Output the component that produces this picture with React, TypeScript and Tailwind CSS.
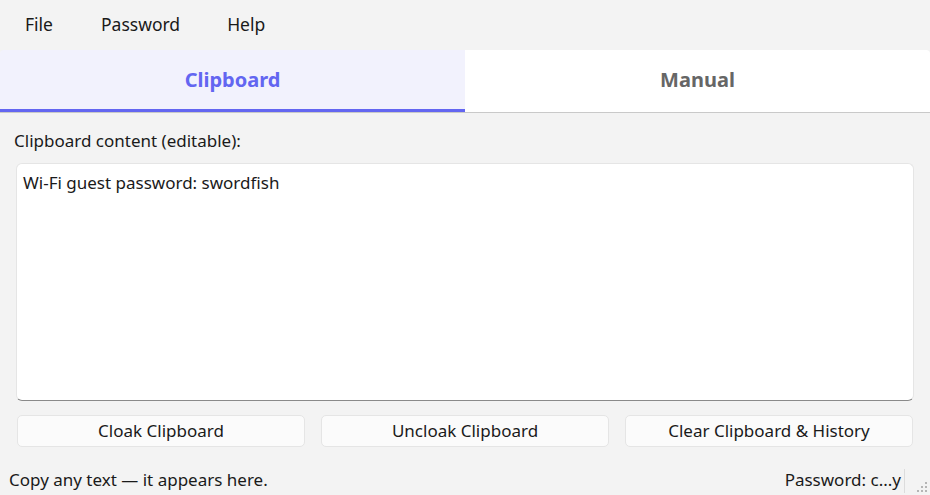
import { useState } from "react";

const font = { fontFamily: '"Segoe UI", "Noto Sans", sans-serif' };

export default function App() {
  const [tab, setTab] = useState<"clipboard" | "manual">("clipboard");
  const [text, setText] = useState("Wi-Fi guest password: swordfish");

  return (
    <div
      className="flex h-[495px] w-[930px] flex-col overflow-hidden bg-[#f3f3f3] text-[#1a1a1a]"
      style={font}
    >
      {/* menu bar */}
      <div className="flex h-[50px] items-center pb-[2px] text-[17.5px]">
        <span className="ml-[25px]">File</span>
        <span className="ml-[48px]">Password</span>
        <span className="ml-[47px]">Help</span>
      </div>

      {/* tabs */}
      <div className="flex h-[63px] border-b border-[#c9c9c9]">
        <button
          onClick={() => setTab("clipboard")}
          className={`flex-1 rounded-tl-[4px] border-b-[3px] text-[20px] font-bold ${
            tab === "clipboard"
              ? "border-[#6366f1] bg-[#f2f2fd] text-[#6366f1]"
              : "border-transparent bg-white text-[#666]"
          }`}
        >
          Clipboard
        </button>
        <button
          onClick={() => setTab("manual")}
          className={`flex-1 rounded-tr-[4px] border-b-[3px] text-[20px] font-bold ${
            tab === "manual"
              ? "border-[#6366f1] bg-[#f2f2fd] text-[#6366f1]"
              : "border-transparent bg-white text-[#666]"
          }`}
        >
          Manual
        </button>
      </div>

      {/* body */}
      <div className="flex flex-1 flex-col px-[16px]">
        <div className="ml-[-2px] mt-[16px] text-[17px] leading-[24px]">Clipboard content (editable):</div>
        <textarea
          value={text}
          onChange={(e) => setText(e.target.value)}
          className="mt-[10px] h-[238px] resize-none rounded-[6px] border border-[#e5e5e5] border-b-[#8a8a8a] bg-white px-[6px] py-[6px] text-[17px] outline-none"
          style={font}
        />
        <div className="mt-[14px] grid grid-cols-3 gap-[16px] px-[1px]">
          {["Cloak Clipboard", "Uncloak Clipboard", "Clear Clipboard & History"].map((label) => (
            <button
              key={label}
              className="h-[32px] rounded-[5px] border border-[#e5e5e5] bg-[#fbfbfb] text-[17px]"
            >
              {label}
            </button>
          ))}
        </div>
      </div>

      {/* status bar */}
      <div className="flex h-[36px] items-end pb-[3px] text-[17px]">
        <span className="ml-[9px]">Copy any text — it appears here.</span>
        <span className="ml-auto">Password: c...y</span>
        <span className="mb-[-1px] ml-[3px] h-[24px] w-px bg-[#dcdcdc]" />
        <svg width="14" height="14" viewBox="0 0 14 14" className="mb-[-1px] ml-[9px] mr-[2px]">
          {[
            [11, 3],
            [11, 7],
            [7, 7],
            [11, 11],
            [7, 11],
            [3, 11],
          ].map(([x, y]) => (
            <rect key={`${x}-${y}`} x={x} y={y} width="2" height="2" fill="#b5b5b5" />
          ))}
        </svg>
      </div>
    </div>
  );
}
